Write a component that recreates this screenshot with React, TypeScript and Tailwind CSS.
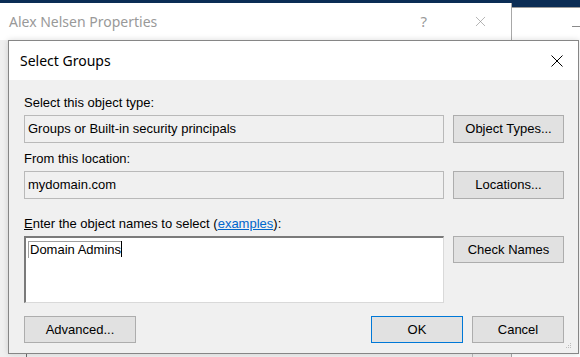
import { X } from 'lucide-react';

const ui = "font-['Liberation_Sans',Arial,sans-serif] text-[13px] text-black";
const titleFont = "font-['Noto_Sans',sans-serif]";

const Button = ({ label, primary = false, h = 'h-[27px]' }: { label: string; primary?: boolean; h?: string }) => (
  <div
    className={`${h} flex items-center justify-center bg-[#e1e1e1] border ${
      primary ? 'border-[#0078d7]' : 'border-[#adadad]'
    }`}
  >
    {label}
  </div>
);

const ReadOnlyField = ({ value }: { value: string }) => (
  <div className="h-[28px] flex items-center pl-[3px] bg-[#f0f0f0] border border-[#b9b9b9]">
    {value}
  </div>
);

export default function App() {
  return (
    <div className="relative w-[580px] h-[357px] overflow-hidden bg-[#0b2d55]">
      {/* window behind on the right */}
      <div className="absolute left-[512px] top-[7px] w-[80px] h-[360px] bg-white border-t border-[#9a9a9a]">
        <div className="mt-[18px] ml-[60px] w-[10px] h-px bg-[#8a8a8a]" />
      </div>

      {/* parent window */}
      <div className="absolute left-0 top-[3px] w-[512px] h-[360px] bg-[#f0f0f0] border-r border-[#a8a8a8]">
        <div className={`${titleFont} h-[37px] bg-white flex items-center text-[14px] text-[#999999]`}>
          <span className="ml-[9px]">Alex Nelsen Properties</span>
          <span className="ml-auto mr-[45px] text-[15px] text-[#9a9a9a]">?</span>
          <X className="mr-[22px] w-[17px] h-[17px] text-[#8c8c8c]" strokeWidth={0.9} />
        </div>
        <div className="absolute left-[26px] top-[350px] w-px h-[10px] bg-[#6d6d6d]" />
        <div className="absolute left-[472px] top-[350px] w-px h-[10px] bg-[#bcbcbc]" />
      </div>

      {/* Select Groups dialog */}
      <div className={`absolute left-[8px] top-[40px] w-[571px] h-[314px] border border-[#868686] bg-[#f0f0f0] shadow-[0_0_6px_rgba(0,0,0,0.15)] ${ui}`}>
        <div className="h-[39px] bg-white flex items-center">
          <span className={`${titleFont} ml-[11px] text-[14px] text-black`}>Select Groups</span>
          <svg className="ml-auto mr-[15px]" width="12" height="12" viewBox="0 0 12 12">
            <path d="M0.5 0.5 L11.5 11.5 M11.5 0.5 L0.5 11.5" stroke="#000" strokeWidth="1" />
          </svg>
        </div>

        <div className="pl-[15px] pr-[14px] pt-[15px]">
          <div className="h-4 leading-4">Select this object type:</div>
          <div className="mt-[4px] flex gap-[9px]">
            <div className="w-[420px]">
              <ReadOnlyField value="Groups or Built-in security principals" />
            </div>
            <div className="w-[111px]">
              <Button label="Object Types..." h="h-[28px]" />
            </div>
          </div>

          <div className="mt-[8px] h-4 leading-4">From this location:</div>
          <div className="mt-[4px] flex gap-[9px]">
            <div className="w-[420px]">
              <ReadOnlyField value="mydomain.com" />
            </div>
            <div className="w-[111px]">
              <Button label="Locations..." h="h-[28px]" />
            </div>
          </div>

          <div className="mt-[17px] h-4 leading-4">
            <span className="underline">E</span>nter the object names to select (
            <span className="text-[#0066cc] underline">examples</span>):
          </div>
          <div className="mt-[4px] flex gap-[9px]">
            <div className="w-[420px] h-[67px] bg-white border-t-2 border-l-2 border-[#7a7a7a] border-r border-b border-r-[#d9d9d9] border-b-[#d9d9d9] pl-[2px] pt-[3px]">
              <div className="flex items-start">
                <span className="leading-[16px] pl-px border-t border-l border-[#a0a0a0]">Domain Admins</span>
                <span className="w-px h-[16px] bg-black" />
              </div>
            </div>
            <div className="w-[111px]">
              <Button label="Check Names" />
            </div>
          </div>

          <div className="mt-[13px] flex">
            <div className="w-[112px]">
              <Button label="Advanced..." />
            </div>
            <div className="ml-auto w-[92px]">
              <Button label="OK" primary />
            </div>
            <div className="ml-[9px] w-[92px]">
              <Button label="Cancel" />
            </div>
          </div>
        </div>

        {/* size grip */}
        <svg className="absolute right-[6px] bottom-[4px]" width="6" height="6" viewBox="0 0 6 6">
          <rect x="4" y="0" width="1" height="1" fill="#bcbcbc" />
          <rect x="2" y="2" width="1" height="1" fill="#bcbcbc" />
          <rect x="4" y="2" width="1" height="1" fill="#bcbcbc" />
          <rect x="0" y="4" width="1" height="1" fill="#bcbcbc" />
          <rect x="2" y="4" width="1" height="1" fill="#bcbcbc" />
          <rect x="4" y="4" width="1" height="1" fill="#bcbcbc" />
        </svg>
      </div>
    </div>
  );
}
